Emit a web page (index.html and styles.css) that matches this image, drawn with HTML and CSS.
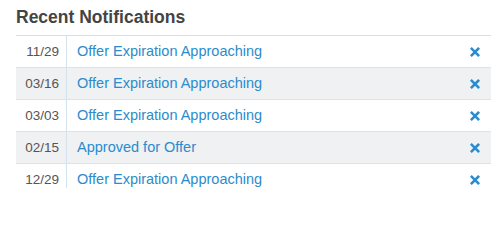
FILE: index.html
```html
<!DOCTYPE html>
<html lang="en">
<head>
<meta charset="utf-8">
<title>Recent Notifications</title>
<link rel="stylesheet" href="styles.css">
</head>
<body>
<section class="notifications">
  <h2 class="title">Recent Notifications</h2>
  <ul class="list">
    <li class="item"><span class="date">11/29</span><a class="link" href="#">Offer Expiration Approaching</a><button class="dismiss" aria-label="Dismiss"><svg viewBox="0 0 10 10" width="10" height="10"><path d="M1.8 1.8 L8.2 8.2 M8.2 1.8 L1.8 8.2" /></svg></button></li>
    <li class="item"><span class="date">03/16</span><a class="link" href="#">Offer Expiration Approaching</a><button class="dismiss" aria-label="Dismiss"><svg viewBox="0 0 10 10" width="10" height="10"><path d="M1.8 1.8 L8.2 8.2 M8.2 1.8 L1.8 8.2" /></svg></button></li>
    <li class="item"><span class="date">03/03</span><a class="link" href="#">Offer Expiration Approaching</a><button class="dismiss" aria-label="Dismiss"><svg viewBox="0 0 10 10" width="10" height="10"><path d="M1.8 1.8 L8.2 8.2 M8.2 1.8 L1.8 8.2" /></svg></button></li>
    <li class="item"><span class="date">02/15</span><a class="link" href="#">Approved for Offer</a><button class="dismiss" aria-label="Dismiss"><svg viewBox="0 0 10 10" width="10" height="10"><path d="M1.8 1.8 L8.2 8.2 M8.2 1.8 L1.8 8.2" /></svg></button></li>
    <li class="item"><span class="date">12/29</span><a class="link" href="#">Offer Expiration Approaching</a><button class="dismiss" aria-label="Dismiss"><svg viewBox="0 0 10 10" width="10" height="10"><path d="M1.8 1.8 L8.2 8.2 M8.2 1.8 L1.8 8.2" /></svg></button></li>
  </ul>
</section>
</body>
</html>
```
FILE: styles.css
```css
html, body {
  margin: 0;
  background: #ffffff;
}
body {
  padding: 0 6px 0 16px;
  font-family: "Liberation Sans", Arial, Helvetica, sans-serif;
}
.title {
  margin: 7px 0 0;
  padding-bottom: 8px;
  font-size: 17.5px;
  line-height: 20px;
  font-weight: bold;
  color: #444444;
  border-bottom: 1px solid #d9e0e5;
}
.list {
  list-style: none;
  margin: 0;
  padding: 0;
}
.item {
  display: flex;
  align-items: center;
  height: 31px;
  border-bottom: 1px solid #dde2e6;
  background-image: linear-gradient(#d3e2ec, #d3e2ec);
  background-repeat: no-repeat;
  background-size: 1px 100%;
  background-position: 50px 0;
}
.item:nth-child(even) {
  background-color: #eff1f3;
}
.item:last-child {
  border-bottom: none;
  background-size: 1px 24px;
}
.date {
  box-sizing: border-box;
  width: 50px;
  padding-right: 7px;
  text-align: right;
  font-size: 13.5px;
  color: #555555;
}
.link {
  flex: 1;
  padding-left: 11px;
  font-size: 14.5px;
  line-height: 31px;
  color: #2a8ccd;
  text-decoration: none;
}
.dismiss {
  display: flex;
  align-items: center;
  justify-content: center;
  width: 10px;
  height: 10px;
  margin-right: 11px;
  padding: 0;
  border: 0;
  background: none;
  cursor: pointer;
}
.dismiss svg {
  display: block;
  stroke: #2a8ccd;
  stroke-width: 2.6;
  stroke-linecap: square;
  fill: none;
}
```
